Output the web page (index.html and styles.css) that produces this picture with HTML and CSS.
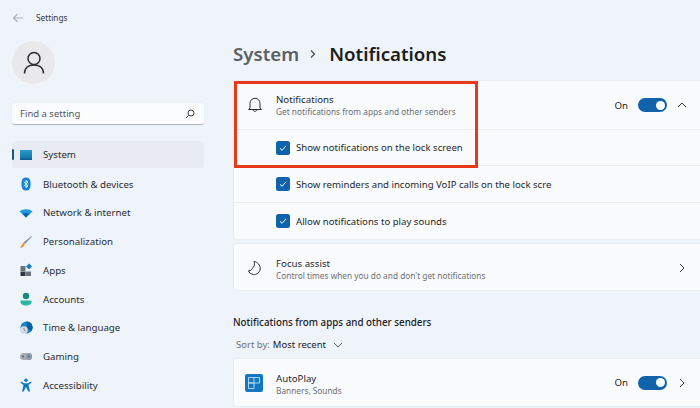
FILE: index.html
```html
<!DOCTYPE html>
<html lang="en">
<head>
<meta charset="utf-8">
<title>Settings</title>
<link rel="stylesheet" href="styles.css">
</head>
<body>
<div class="app">
  <aside class="side">
    <div class="titlebar">
      <svg class="back" width="12" height="12" viewBox="0 0 12 12"><path d="M11 6H1.500M5.500 2 1.500 6l4 4" fill="none" stroke="#a9b0b8" stroke-width="1.100"/></svg>
      <span>Settings</span>
    </div>
    <div class="avatar">
      <svg width="24" height="24" viewBox="0 0 24 24"><circle cx="12" cy="7.500" r="6" fill="none" stroke="#2a2c30" stroke-width="1.500"/><path d="M2.500 22.500c0-5.500 4-8.600 9.500-8.600s9.500 3.100 9.500 8.600" fill="none" stroke="#2a2c30" stroke-width="1.500"/></svg>
    </div>
    <div class="search">
      <span>Find a setting</span>
      <svg width="10" height="10" viewBox="0 0 10 10"><circle cx="6" cy="4" r="3" fill="none" stroke="#444" stroke-width="1"/><path d="M3.800 6.200 1 9" stroke="#444" stroke-width="1"/></svg>
    </div>
    <nav class="nav">
      <div class="nav-item active"><i class="marker"></i>
        <svg class="nav-icon" viewBox="0 0 14 14"><defs><linearGradient id="sys" x1="0" y1="0" x2="0" y2="1"><stop offset="0" stop-color="#2a9ccb"/><stop offset="1" stop-color="#1672a8"/></linearGradient></defs><rect x="1" y="2" width="12" height="9" fill="url(#sys)"/><rect x="1" y="10.500" width="12" height="1.500" fill="#0f5f96"/></svg><span>System</span></div>
      <div class="nav-item">
        <svg class="nav-icon" viewBox="0 0 14 14"><rect x="2.500" y="0.500" width="9" height="13" rx="4.500" fill="#1383d6"/><path d="M4.800 4.800 9 8.800 7 10.800V3.200L9 5.200 4.800 9.200" fill="none" stroke="#fff" stroke-width=".9"/></svg><span>Bluetooth &amp; devices</span></div>
      <div class="nav-item">
        <svg class="nav-icon" viewBox="0 0 14 14"><path d="M0.500 5.500C4 2.500 10 2.500 13.500 5.500L7 11.500Z" fill="#1f9bd8"/><path d="M3.500 8C5.500 6.500 8.500 6.500 10.500 8L7 11.500Z" fill="#0e64a8"/></svg><span>Network &amp; internet</span></div>
      <div class="nav-item">
        <svg class="nav-icon" viewBox="0 0 14 14"><path d="M12.500 1 13 1.500 6 9 4.500 7.500Z" fill="#8a8f96"/><path d="M4.300 7.800 5.800 9.200C5 12 3 12.800 1 12.800 2.500 11.500 2.500 8.800 4.300 7.800Z" fill="#e8973f"/></svg><span>Personalization</span></div>
      <div class="nav-item">
        <svg class="nav-icon" viewBox="0 0 14 14"><rect x="1.500" y="3" width="5" height="5" fill="#6b747d"/><rect x="1.500" y="8.500" width="5" height="4.500" fill="#2f373e"/><rect x="7" y="8.500" width="5" height="4.500" fill="#6b747d"/><path d="M10 .5 13 3.500 10 6.500 7 3.500Z" fill="#1a7fc8"/></svg><span>Apps</span></div>
      <div class="nav-item">
        <svg class="nav-icon" viewBox="0 0 14 14"><circle cx="7" cy="4" r="3.200" fill="#128a82"/><path d="M1.500 8.500h11v1.500c0 2-2.500 3.500-5.500 3.500S1.500 12 1.500 10Z" fill="#2bb5a5"/></svg><span>Accounts</span></div>
      <div class="nav-item">
        <svg class="nav-icon" viewBox="0 0 14 14"><circle cx="7.500" cy="6.500" r="6" fill="#1a86c8"/><path d="M7.500.5a6 6 0 0 1 5 9.500L8 7.500Z" fill="#0e5fa0"/><circle cx="5" cy="9" r="3.800" fill="#d5dbe2"/><path d="M5 6.800V9l1.500 1" fill="none" stroke="#6b7480" stroke-width=".7"/></svg><span>Time &amp; language</span></div>
      <div class="nav-item">
        <svg class="nav-icon" viewBox="0 0 14 14"><rect x="1" y="3" width="12" height="7" rx="3.500" fill="#a9aeb5"/><rect x="7" y="3" width="6" height="7" rx="3" fill="#8d9aa8"/><circle cx="4" cy="6.500" r="1.100" fill="#5b6068"/><circle cx="10" cy="6.500" r="1.100" fill="#3d79ab"/></svg><span>Gaming</span></div>
      <div class="nav-item">
        <svg class="nav-icon" viewBox="0 0 14 14"><circle cx="7" cy="2.200" r="1.700" fill="#1279bf"/><path d="M2 3.500 5 5.200h4l3-1.700.5 1.300L9.500 7l1.500 6.500H9.300L7 9 4.700 13.500H3L4.500 7 1.500 4.800Z" fill="#1279bf"/></svg><span>Accessibility</span></div>
    </nav>
  </aside>
  <main class="main">
    <h1 class="crumb"><span class="crumb-parent">System</span>
      <svg class="crumb-sep" width="8" height="10" viewBox="0 0 8 10"><path d="M2 1.500 5.500 5 2 8.500" fill="none" stroke="#44484e" stroke-width="1.200"/></svg>
      <span>Notifications</span></h1>
    <section class="card stack">
      <div class="row tall">
        <svg class="row-icon" width="16" height="16" viewBox="0 0 16 16"><path d="M3 11V6.300a5 5 0 0 1 10 0V11l1.500 1.500h-13ZM6 12.500c0 2.400 4 2.400 4 0" fill="none" stroke="#2a2c30" stroke-width="1"/></svg>
        <div class="row-text"><div class="row-title">Notifications</div><div class="row-sub">Get notifications from apps and other senders</div></div>
        <div class="controls"><span class="on">On</span><span class="toggle"><i></i></span>
          <svg class="chev" width="10" height="10" viewBox="0 0 10 10"><path d="M1 7 5 3l4 4" fill="none" stroke="#3a3d42" stroke-width="1"/></svg></div>
      </div>
      <div class="row check r1"><span class="box"><svg width="10" height="10" viewBox="0 0 10 10"><path d="M2 5.300 4.100 7.300 8 2.800" fill="none" stroke="#fff" stroke-width="1"/></svg></span><span class="clip">Show notifications on the lock screen</span></div>
      <div class="row check r2"><span class="box"><svg width="10" height="10" viewBox="0 0 10 10"><path d="M2 5.300 4.100 7.300 8 2.800" fill="none" stroke="#fff" stroke-width="1"/></svg></span><span class="clip">Show reminders and incoming VoIP calls on the lock screen</span></div>
      <div class="row check r3"><span class="box"><svg width="10" height="10" viewBox="0 0 10 10"><path d="M2 5.300 4.100 7.300 8 2.800" fill="none" stroke="#fff" stroke-width="1"/></svg></span><span class="clip">Allow notifications to play sounds</span></div>
    </section>
    <section class="card single">
      <div class="row tall">
        <svg class="row-icon" width="16" height="16" viewBox="0 0 16 16"><path d="M7 1.500C10.500 2 13.500 5 13.200 9 12.800 12.500 9.500 15 6.500 14.500 4 14.200 2 12.500 1.500 10.800 3.800 11 5 9.500 5 8.500 7.500 7 8 4 7 1.500Z" fill="none" stroke="#2a2c30" stroke-width="1"/></svg>
        <div class="row-text"><div class="row-title">Focus assist</div><div class="row-sub">Control times when you do and don't get notifications</div></div>
        <div class="controls"><svg class="chev" width="10" height="10" viewBox="0 0 10 10"><path d="M3 1l4 4-4 4" fill="none" stroke="#3a3d42" stroke-width="1"/></svg></div>
      </div>
    </section>
    <h2 class="section">Notifications from apps and other senders</h2>
    <div class="sort"><span class="sort-label">Sort by:</span> <span>Most recent</span>
      <svg width="10" height="10" viewBox="0 0 10 10"><path d="M1 3l4 4 4-4" fill="none" stroke="#5a5e64" stroke-width="1"/></svg></div>
    <section class="card app-card">
      <div class="row tall">
        <span class="app-icon"><svg width="12" height="12" viewBox="0 0 12 12"><path d="M.5 6V.5h5.500V6H.5ZM6 .5h5.500V6H6M.5 6h5.500v5.500H.5Z" fill="none" stroke="#bfe0f5" stroke-width=".9"/></svg></span>
        <div class="row-text"><div class="row-title">AutoPlay</div><div class="row-sub">Banners, Sounds</div></div>
        <div class="controls"><span class="on">On</span><span class="toggle"><i></i></span>
          <svg class="chev" width="10" height="10" viewBox="0 0 10 10"><path d="M3 1l4 4-4 4" fill="none" stroke="#3a3d42" stroke-width="1"/></svg></div>
      </div>
    </section>
    <div class="highlight"></div>
  </main>
</div>
</body>
</html>
```
FILE: styles.css
```css
* { box-sizing: border-box; }
html, body { margin: 0; padding: 0; height: 100%; overflow: hidden; }
body { background: #eff4fb; font-family: "Noto Sans", "Open Sans", sans-serif; color: #1e2024; font-size: 9.700px; }
.app { display: flex; width: 700px; height: 408px; overflow: hidden; }
.side { width: 233px; flex: none; padding: 0 29px 0 12px; }
.titlebar { display: flex; align-items: center; gap: 12px; height: 35px; font-size: 8.300px; color: #33363b; }
.avatar { width: 43px; height: 43px; border-radius: 50%; background: #e9e9ec; display: flex; align-items: center; justify-content: center; margin-top: 6px; }
.search { margin-top: 19px; height: 22px; background: #fbfcfe; border-radius: 3px; border-bottom: 1px solid #b5b8bd; box-shadow: 0 0 2px rgba(0,0,0,.08); display: flex; align-items: center; justify-content: space-between; padding: 0 9px 0 8px; font-size: 9.500px; color: #55585e; }
.nav { margin-top: 16px; display: flex; flex-direction: column; }
.nav-item { position: relative; height: 28.750px; display: flex; align-items: center; gap: 10px; padding-left: 7px; font-size: 9.700px; color: #2a2c31; border-radius: 3px; }
.nav-item.active { background: #e8ecf2; height: 27px; margin-bottom: 1.750px; }
.nav-icon { width: 14px; height: 14px; flex: none; }
.marker { position: absolute; left: 0; top: 8px; width: 2px; height: 11px; background: #0f5a9c; border-radius: 1px; }
.main { flex: 1; min-width: 0; position: relative; }
.crumb { margin: 0; height: 80px; padding: 40px 0 12px; display: flex; align-items: center; font-size: 18.700px; line-height: 28px; font-weight: 600; color: #1b1d21; white-space: nowrap; }
.crumb-parent { color: #5b5f66; }
.crumb-sep { margin: 0 12px 0 10px; }
.card { background: #fafbfd; border-radius: 4px 0 0 4px; width: 467px; border: 1px solid #e9ecf1; border-right: 0; }
.stack { height: 160px; }
.single { height: 48px; margin-top: 3px; }
.app-card { height: 49px; margin-top: 6px; }
.row { display: flex; align-items: center; padding-left: 13px; border-bottom: 1px solid #eaedf1; }
.single .row, .app-card .row, .r3 { border-bottom: 0; }
.tall { height: 47px; }
.stack .tall { height: 49px; }
.check { padding-left: 42px; gap: 6px; color: #26282c; font-size: 9.600px; }
.r1 { height: 36px; }
.r2 { height: 37px; }
.r3 { height: 36px; }
.clip { width: 256px; overflow: hidden; white-space: nowrap; }
.box { width: 14px; height: 14px; border-radius: 2.500px; background: #0f63ad; display: flex; align-items: center; justify-content: center; flex: none; }
.row-icon { flex: none; }
.row-text { margin-left: 13px; flex: 1; min-width: 0; }
.single .row-text { padding-top: 4px; }
.app-card .row-text { padding-top: 3px; }
.row-title { font-size: 9.700px; line-height: 13px; color: #26282c; }
.row-sub { font-size: 8.300px; line-height: 12px; color: #6c7076; }
.controls { display: flex; align-items: center; flex: none; padding-right: 13px; }
.on { margin-right: 10px; }
.toggle { width: 29px; height: 14px; border-radius: 7px; background: #0f63ad; display: block; position: relative; }
.toggle i { position: absolute; right: 2.500px; top: 2.500px; width: 9px; height: 9px; border-radius: 50%; background: #fff; }
.chev { margin-left: 10px; }
.section { margin: 25px 0 0; font-size: 9.800px; line-height: 14px; font-weight: 500; color: #1e2024; }
.sort { margin-top: 8px; display: flex; align-items: center; gap: 3px; font-size: 9.500px; line-height: 14px; padding-left: 3px; }
.sort-label { color: #6c7076; }
.sort svg { margin-left: 4px; }
.app-icon { width: 18px; height: 18px; border-radius: 2px; background: #1278c4; display: flex; align-items: center; justify-content: center; flex: none; margin-left: -2px; }
.highlight { position: absolute; left: 1px; top: 81px; width: 244px; height: 87px; border: 3px solid #e8391b; pointer-events: none; }
```
